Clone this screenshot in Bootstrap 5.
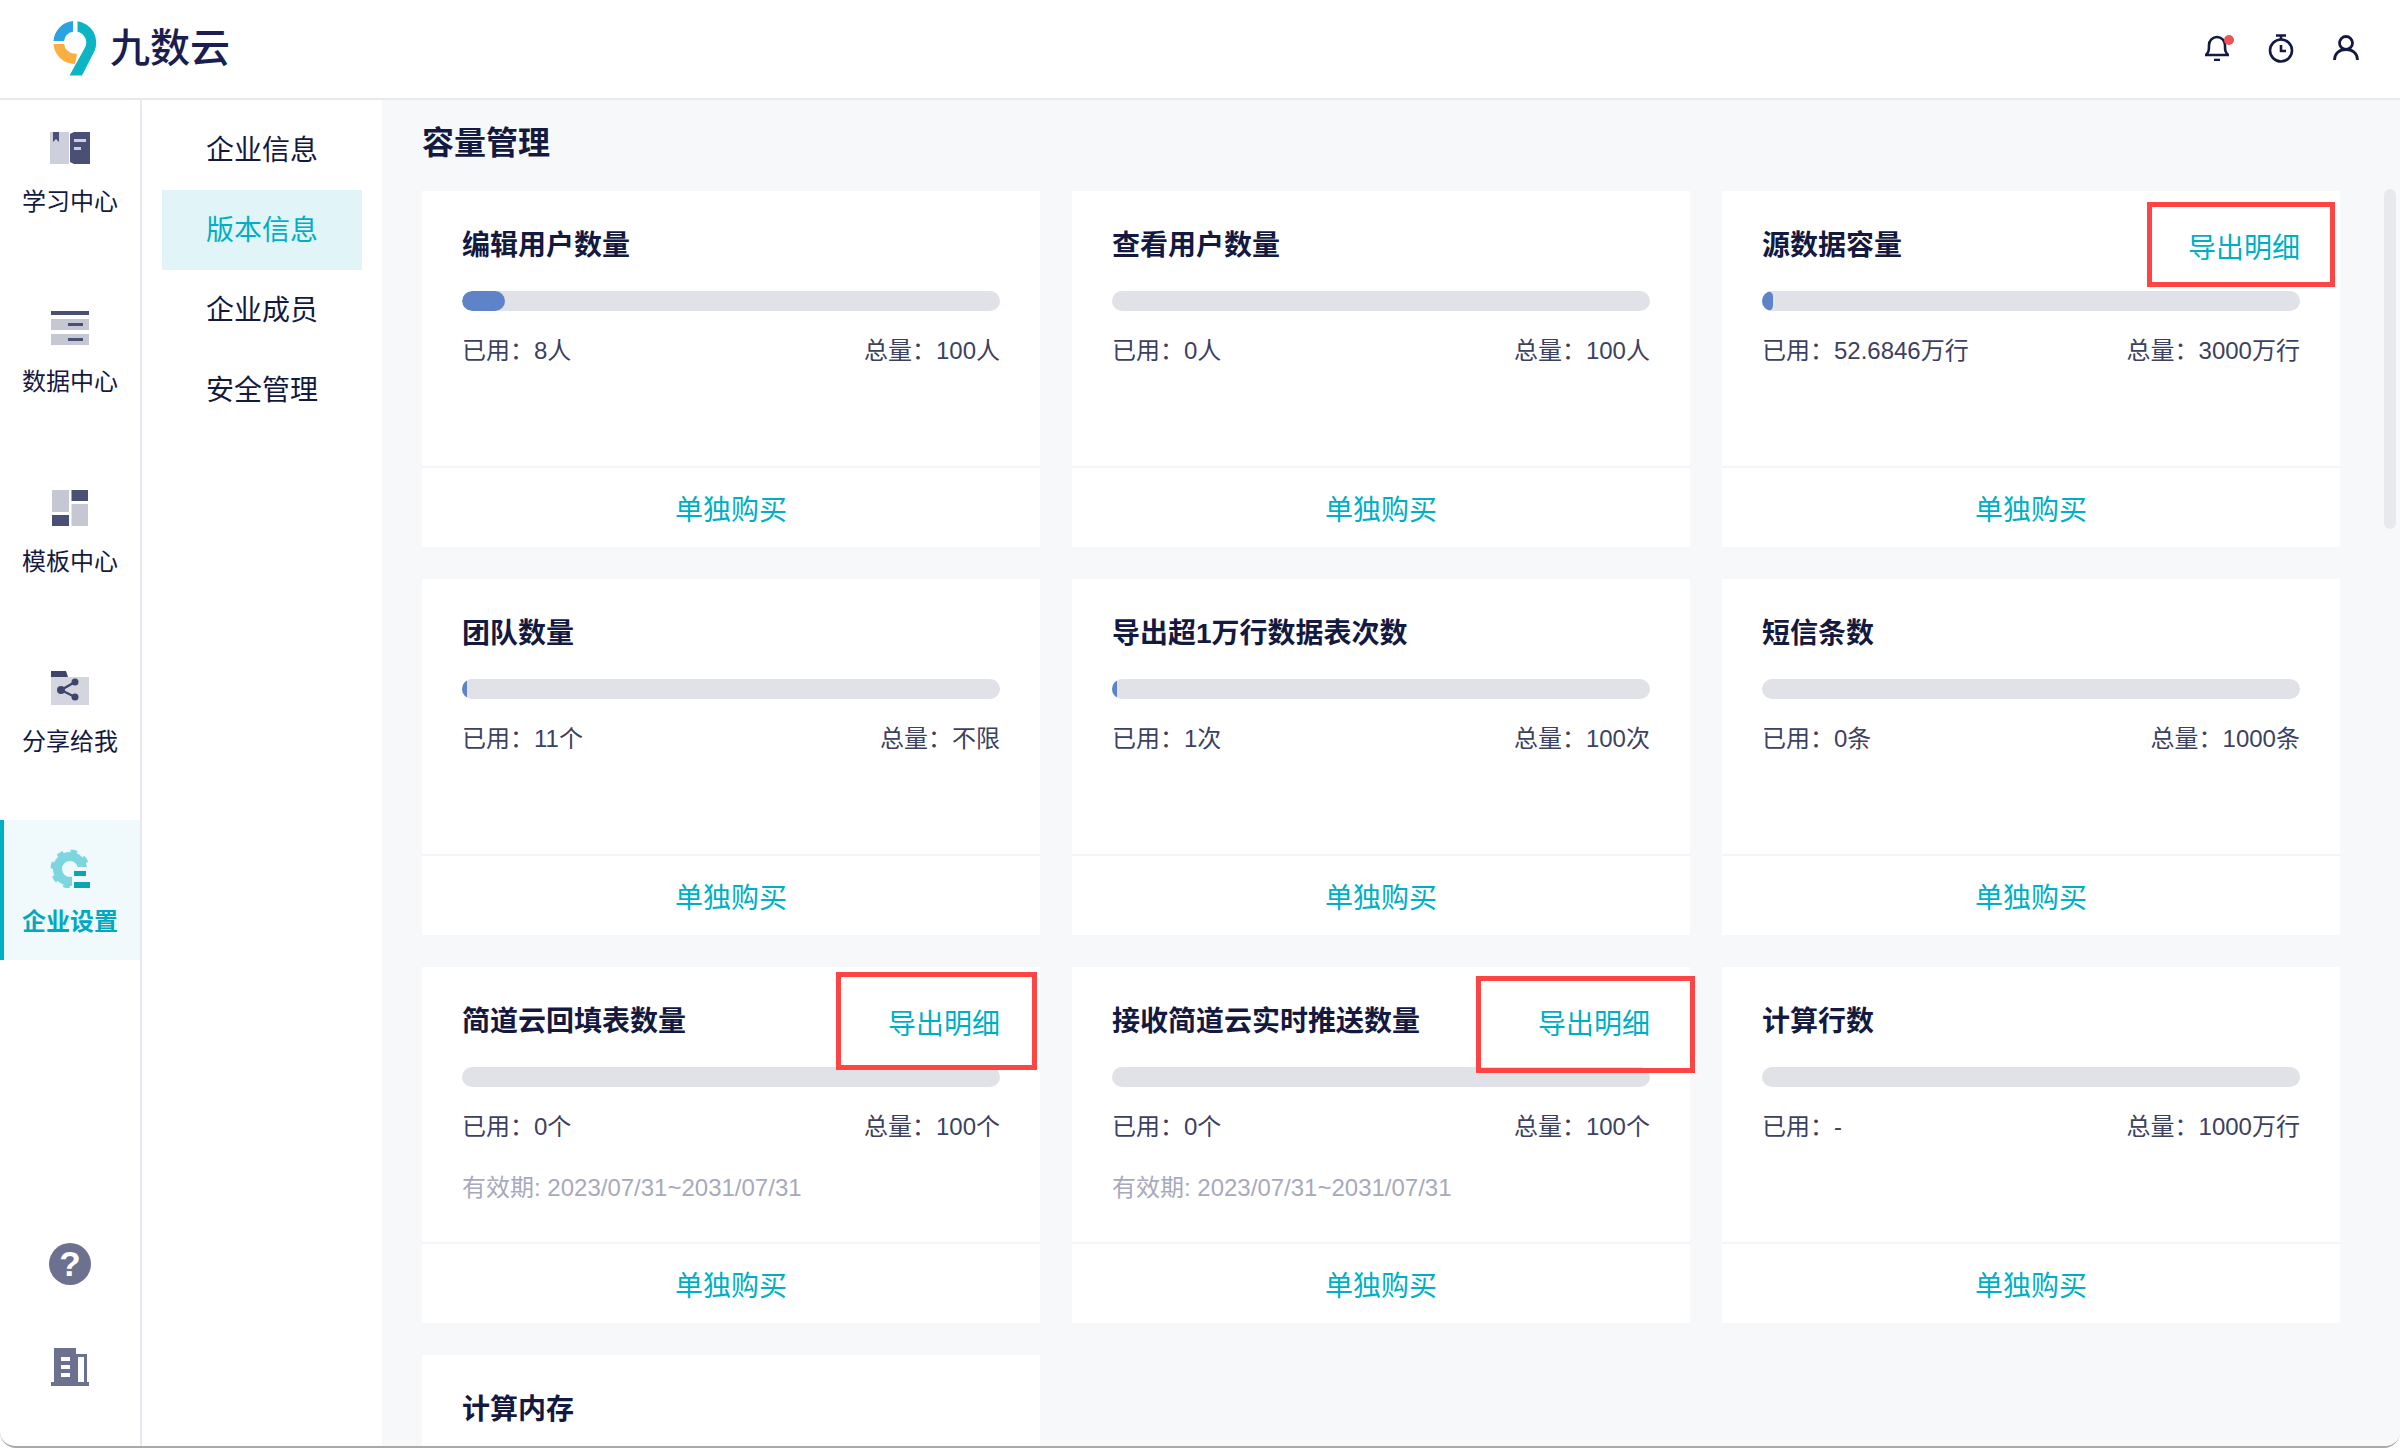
<!DOCTYPE html>
<html lang="zh-CN">
<head>
    <meta charset="UTF-8">
    <meta name="viewport" content="width=device-width, initial-scale=1.0">
    <title>容量管理</title>
    <link href="https://cdn.jsdelivr.net/npm/bootstrap@5.3.0/dist/css/bootstrap.min.css" rel="stylesheet">
    <style>
        html, body { height: 100%; }
        body { font-family: "Liberation Sans", "Noto Sans CJK SC", sans-serif; color: #14193f; background: #fff; overflow: hidden; }

        .app-shell { height: 1448px; border-bottom: 2px solid #a9a9a9; border-radius: 0 0 16px 16px; overflow: hidden; }
        .top-bar { height: 100px; flex: none; border-bottom: 2px solid #e8e8f0; padding: 0 41px 2px 53px; }
        .logo-text { font-size: 40px; font-weight: 500; line-height: 1; color: #1a1e50; margin-left: 13px; }
        .top-icons { gap: 39px; }
        .bell-dot { top: 0; right: -5px; width: 10px; height: 10px; background: #ea5455; border-radius: 50%; }

        .side-rail { width: 142px; flex: none; border-right: 2px solid #e8e8f0; }
        .rail-item { height: 140px; margin-bottom: 40px; font-size: 24px; line-height: 32px; color: #14193f; text-decoration: none; padding-top: 28px; }
        .rail-item svg { height: 40px; margin-bottom: 18px; }
        .rail-item.current { background: #f0f9fb; border-left: 4px solid #00afc4; color: #00a9bf; font-weight: 700; padding-right: 4px; }
        .rail-bottom { padding-bottom: 60px; gap: 63px; }
        .help-dot { width: 42px; height: 42px; border-radius: 50%; background: #6d7190; color: #fff; font-size: 35px; font-weight: 700; line-height: 42px; text-align: center; }

        .sub-nav { width: 240px; flex: none; padding: 10px 20px 0; }
        .sub-nav a { display: block; height: 80px; line-height: 81px; text-align: center; font-size: 28px; color: #14193f; text-decoration: none; }
        .sub-nav a.current { background: #e1f5f8; color: #00afc4; }

        .main-pane { background: #f7f8fa; padding: 0 60px 0 40px; overflow: hidden; }
        .pane-title { font-size: 32px; font-weight: 700; line-height: 40px; margin: 23px 0 28px; color: #14193f; }
        .cap-grid { --bs-gutter-x: 32px; --bs-gutter-y: 32px; }
        .cap-card { height: 356px; }
        .cap-card .card-body { padding: 33px 40px 0; }
        .cap-head { height: 40px; margin-bottom: 27px; }
        .cap-name { font-size: 28px; font-weight: 700; line-height: 40px; color: #14193f; padding-top: 2px; }
        .export-link { font-size: 28px; line-height: 40px; color: #00afc4; text-decoration: none; margin-top: 5px; }
        .cap-bar { height: 20px; border-radius: 10px; background: #e1e2e7; }
        .cap-bar .progress-bar { background: #5f83c9; border-radius: 10px; }
        .cap-stats { font-size: 24px; line-height: 32px; color: #3c4160; margin-top: 24px; }
        .cap-valid { font-size: 24px; line-height: 32px; color: #a8a9bb; margin-top: 29px; }
        .cap-card .card-footer { height: 81px; padding: 6px 0 0; background: #fff; border-top: 2px solid #f5f5f9; border-radius: 0; line-height: 73px; text-align: center; }
        .buy-link { font-size: 28px; color: #00afc4; text-decoration: none; }

        .note-box { border: 5px solid #ff4444; z-index: 5; }
        .note-a { left: 2147px; top: 202px; width: 188px; height: 85px; }
        .note-b { left: 836px; top: 972px; width: 201px; height: 98px; }
        .note-c { left: 1476px; top: 976px; width: 219px; height: 97px; }
        .fake-scroll { left: 2384px; top: 189px; width: 12px; height: 340px; border-radius: 6px; background: #e8e9ec; }
    </style>
</head>
<body>
    <div class="app-shell d-flex flex-column position-relative">

        <!-- 顶部栏 -->
        <header class="top-bar d-flex align-items-center justify-content-between">
            <div class="d-flex align-items-center">
                <svg width="44" height="55" viewBox="0 0 44 55">
                    <path d="M.5 20A21.500 21.500 0 0 1 20 .1V10.700A11 11 0 0 0 11 20Z" fill="#29a3e3"/>
                    <path d="M.5 23H11A11 11 0 0 0 21 32.500L24 33L22 43A21.500 21.500 0 0 1 .5 23Z" fill="#fbae42"/>
                    <path d="M24.500 .2A21.500 21.500 0 0 1 41.500 30L29 54.500H16.500L31.500 27.500A11 11 0 0 0 24.500 10.800Z" fill="#0cb5c4"/>
                </svg>
                <span class="logo-text">九数云</span>
            </div>
            <div class="top-icons d-flex align-items-center">
                <span class="position-relative d-flex">
                    <svg width="24" height="26" viewBox="0 0 24 26" fill="none" stroke="#14193f" stroke-width="2.6">
                        <path d="M1 20H23C20 17 20 15 20 10A8 8 0 0 0 4 10C4 15 4 17 1 20Z"/>
                        <path d="M9 25H15"/>
                    </svg>
                    <span class="bell-dot position-absolute"></span>
                </span>
                <svg width="26" height="29" viewBox="0 0 26 29" fill="none" stroke="#14193f" stroke-width="2.6">
                    <circle cx="13" cy="16.5" r="11"/>
                    <path d="M8 1.5H18M13 1.5V5"/>
                    <path d="M13 11V17H18"/>
                </svg>
                <svg width="26" height="26" viewBox="0 0 26 26" fill="none" stroke="#14193f" stroke-width="2.8">
                    <circle cx="13" cy="8" r="6.5"/>
                    <path d="M1.5 25C1.5 18.5 6.5 14.5 13 14.5S24.5 18.5 24.5 25"/>
                </svg>
            </div>
        </header>

        <div class="d-flex flex-grow-1 overflow-hidden">
            <!-- 左侧主导航 -->
            <nav class="side-rail d-flex flex-column">
                <a class="rail-item d-flex flex-column align-items-center" href="#">
                    <svg width="40" viewBox="0 0 40 40">
                        <path d="M0 4H19V36H0Z" fill="#cdd0dc"/>
                        <path d="M3 4H9V14L6 11L3 14Z" fill="#4a4f75"/>
                        <path d="M20 6L24 4H40V36H24L20 34Z" fill="#4a4f75"/>
                        <path d="M24 11H36V14H24ZM24 19H31V22H24Z" fill="#cdd0dc"/>
                    </svg>
                    学习中心
                </a>
                <a class="rail-item d-flex flex-column align-items-center" href="#">
                    <svg width="40" viewBox="0 0 40 40">
                        <path d="M1 3H39V7H1Z" fill="#4a4f75"/>
                        <path d="M1 11H39V22H1ZM1 26H39V37H1Z" fill="#c5c8d3"/>
                        <path d="M18 15H33V18H18ZM18 30H33V33H18Z" fill="#4a4f75"/>
                    </svg>
                    数据中心
                </a>
                <a class="rail-item d-flex flex-column align-items-center" href="#">
                    <svg width="40" viewBox="0 0 40 40">
                        <path d="M2 2H19V24H2ZM21.500 16H38V38H21.500Z" fill="#c5c8d3"/>
                        <path d="M21.500 2H38V13H21.500ZM2 27H19V38H2Z" fill="#4a4f75"/>
                    </svg>
                    模板中心
                </a>
                <a class="rail-item d-flex flex-column align-items-center" href="#">
                    <svg width="40" viewBox="0 0 40 40">
                        <path d="M1 9H39V37H1Z" fill="#d3d5df"/>
                        <path d="M1 3H16L18 9H1Z" fill="#3f4469"/>
                        <path d="M11 22L25 14M11 22L25 29" stroke="#3f4469" stroke-width="2.500"/>
                        <circle cx="11" cy="22" r="4" fill="#3f4469"/>
                        <circle cx="25" cy="14" r="3.500" fill="#3f4469"/>
                        <circle cx="25" cy="29" r="3.500" fill="#3f4469"/>
                    </svg>
                    分享给我
                </a>
                <a class="rail-item current d-flex flex-column align-items-center" href="#">
                    <svg width="40" viewBox="0 0 40 40">
                        <circle cx="20" cy="21" r="12.500" fill="none" stroke="#7dd5e0" stroke-width="9"/>
                        <circle cx="20" cy="21" r="17.500" fill="none" stroke="#7dd5e0" stroke-width="4" stroke-dasharray="6.500 7.250"/>
                        <rect x="22" y="19" width="18" height="21" fill="#f0f9fb"/>
                        <path d="M24 23H36V28H24ZM24 34H40V40H24Z" fill="#0ea2b5"/>
                    </svg>
                    企业设置
                </a>
                <div class="rail-bottom mt-auto d-flex flex-column align-items-center">
                    <div class="help-dot">?</div>
                    <svg width="38" height="38" viewBox="0 0 38 38">
                        <path d="M3 0H25V34H3ZM0 34H38V38H0Z" fill="#6d7190"/>
                        <path d="M25 6H36V34H33V9H27V34H25Z" fill="#6d7190"/>
                        <path d="M10 9H19V13H10ZM10 17H19V21H10ZM10 25H19V29H10Z" fill="#fff"/>
                    </svg>
                </div>
            </nav>

            <!-- 二级导航 -->
            <div class="sub-nav">
                <a href="#">企业信息</a>
                <a class="current" href="#">版本信息</a>
                <a href="#">企业成员</a>
                <a href="#">安全管理</a>
            </div>

            <!-- 内容区 -->
            <main class="main-pane flex-grow-1">
                <h2 class="pane-title">容量管理</h2>
                <div class="row row-cols-3 cap-grid">

                    <div class="col">
                        <div class="card cap-card border-0 rounded-0">
                            <div class="card-body">
                                <div class="cap-head d-flex justify-content-between"><span class="cap-name">编辑用户数量</span></div>
                                <div class="progress cap-bar"><div class="progress-bar" style="width: 8%"></div></div>
                                <div class="cap-stats d-flex justify-content-between"><span>已用：8人</span><span>总量：100人</span></div>
                            </div>
                            <div class="card-footer"><a class="buy-link" href="#">单独购买</a></div>
                        </div>
                    </div>

                    <div class="col">
                        <div class="card cap-card border-0 rounded-0">
                            <div class="card-body">
                                <div class="cap-head d-flex justify-content-between"><span class="cap-name">查看用户数量</span></div>
                                <div class="progress cap-bar"><div class="progress-bar" style="width: 0%"></div></div>
                                <div class="cap-stats d-flex justify-content-between"><span>已用：0人</span><span>总量：100人</span></div>
                            </div>
                            <div class="card-footer"><a class="buy-link" href="#">单独购买</a></div>
                        </div>
                    </div>

                    <div class="col">
                        <div class="card cap-card border-0 rounded-0">
                            <div class="card-body">
                                <div class="cap-head d-flex justify-content-between"><span class="cap-name">源数据容量</span><a class="export-link" href="#">导出明细</a></div>
                                <div class="progress cap-bar"><div class="progress-bar" style="width: 2%"></div></div>
                                <div class="cap-stats d-flex justify-content-between"><span>已用：52.6846万行</span><span>总量：3000万行</span></div>
                            </div>
                            <div class="card-footer"><a class="buy-link" href="#">单独购买</a></div>
                        </div>
                    </div>

                    <div class="col">
                        <div class="card cap-card border-0 rounded-0">
                            <div class="card-body">
                                <div class="cap-head d-flex justify-content-between"><span class="cap-name">团队数量</span></div>
                                <div class="progress cap-bar"><div class="progress-bar" style="width: 1%"></div></div>
                                <div class="cap-stats d-flex justify-content-between"><span>已用：11个</span><span>总量：不限</span></div>
                            </div>
                            <div class="card-footer"><a class="buy-link" href="#">单独购买</a></div>
                        </div>
                    </div>

                    <div class="col">
                        <div class="card cap-card border-0 rounded-0">
                            <div class="card-body">
                                <div class="cap-head d-flex justify-content-between"><span class="cap-name">导出超1万行数据表次数</span></div>
                                <div class="progress cap-bar"><div class="progress-bar" style="width: 1%"></div></div>
                                <div class="cap-stats d-flex justify-content-between"><span>已用：1次</span><span>总量：100次</span></div>
                            </div>
                            <div class="card-footer"><a class="buy-link" href="#">单独购买</a></div>
                        </div>
                    </div>

                    <div class="col">
                        <div class="card cap-card border-0 rounded-0">
                            <div class="card-body">
                                <div class="cap-head d-flex justify-content-between"><span class="cap-name">短信条数</span></div>
                                <div class="progress cap-bar"><div class="progress-bar" style="width: 0%"></div></div>
                                <div class="cap-stats d-flex justify-content-between"><span>已用：0条</span><span>总量：1000条</span></div>
                            </div>
                            <div class="card-footer"><a class="buy-link" href="#">单独购买</a></div>
                        </div>
                    </div>

                    <div class="col">
                        <div class="card cap-card border-0 rounded-0">
                            <div class="card-body">
                                <div class="cap-head d-flex justify-content-between"><span class="cap-name">简道云回填表数量</span><a class="export-link" href="#">导出明细</a></div>
                                <div class="progress cap-bar"><div class="progress-bar" style="width: 0%"></div></div>
                                <div class="cap-stats d-flex justify-content-between"><span>已用：0个</span><span>总量：100个</span></div>
                                <div class="cap-valid">有效期: 2023/07/31~2031/07/31</div>
                            </div>
                            <div class="card-footer"><a class="buy-link" href="#">单独购买</a></div>
                        </div>
                    </div>

                    <div class="col">
                        <div class="card cap-card border-0 rounded-0">
                            <div class="card-body">
                                <div class="cap-head d-flex justify-content-between"><span class="cap-name">接收简道云实时推送数量</span><a class="export-link" href="#">导出明细</a></div>
                                <div class="progress cap-bar"><div class="progress-bar" style="width: 0%"></div></div>
                                <div class="cap-stats d-flex justify-content-between"><span>已用：0个</span><span>总量：100个</span></div>
                                <div class="cap-valid">有效期: 2023/07/31~2031/07/31</div>
                            </div>
                            <div class="card-footer"><a class="buy-link" href="#">单独购买</a></div>
                        </div>
                    </div>

                    <div class="col">
                        <div class="card cap-card border-0 rounded-0">
                            <div class="card-body">
                                <div class="cap-head d-flex justify-content-between"><span class="cap-name">计算行数</span></div>
                                <div class="progress cap-bar"><div class="progress-bar" style="width: 0%"></div></div>
                                <div class="cap-stats d-flex justify-content-between"><span>已用：-</span><span>总量：1000万行</span></div>
                            </div>
                            <div class="card-footer"><a class="buy-link" href="#">单独购买</a></div>
                        </div>
                    </div>

                    <div class="col">
                        <div class="card cap-card border-0 rounded-0">
                            <div class="card-body">
                                <div class="cap-head d-flex justify-content-between"><span class="cap-name">计算内存</span></div>
                            </div>
                        </div>
                    </div>

                </div>
            </main>
        </div>

        <!-- 标注红框与滚动条 -->
        <div class="note-box note-a position-absolute"></div>
        <div class="note-box note-b position-absolute"></div>
        <div class="note-box note-c position-absolute"></div>
        <div class="fake-scroll position-absolute"></div>
    </div>

    <script src="https://cdn.jsdelivr.net/npm/bootstrap@5.3.0/dist/js/bootstrap.bundle.min.js"></script>
</body>
</html>
